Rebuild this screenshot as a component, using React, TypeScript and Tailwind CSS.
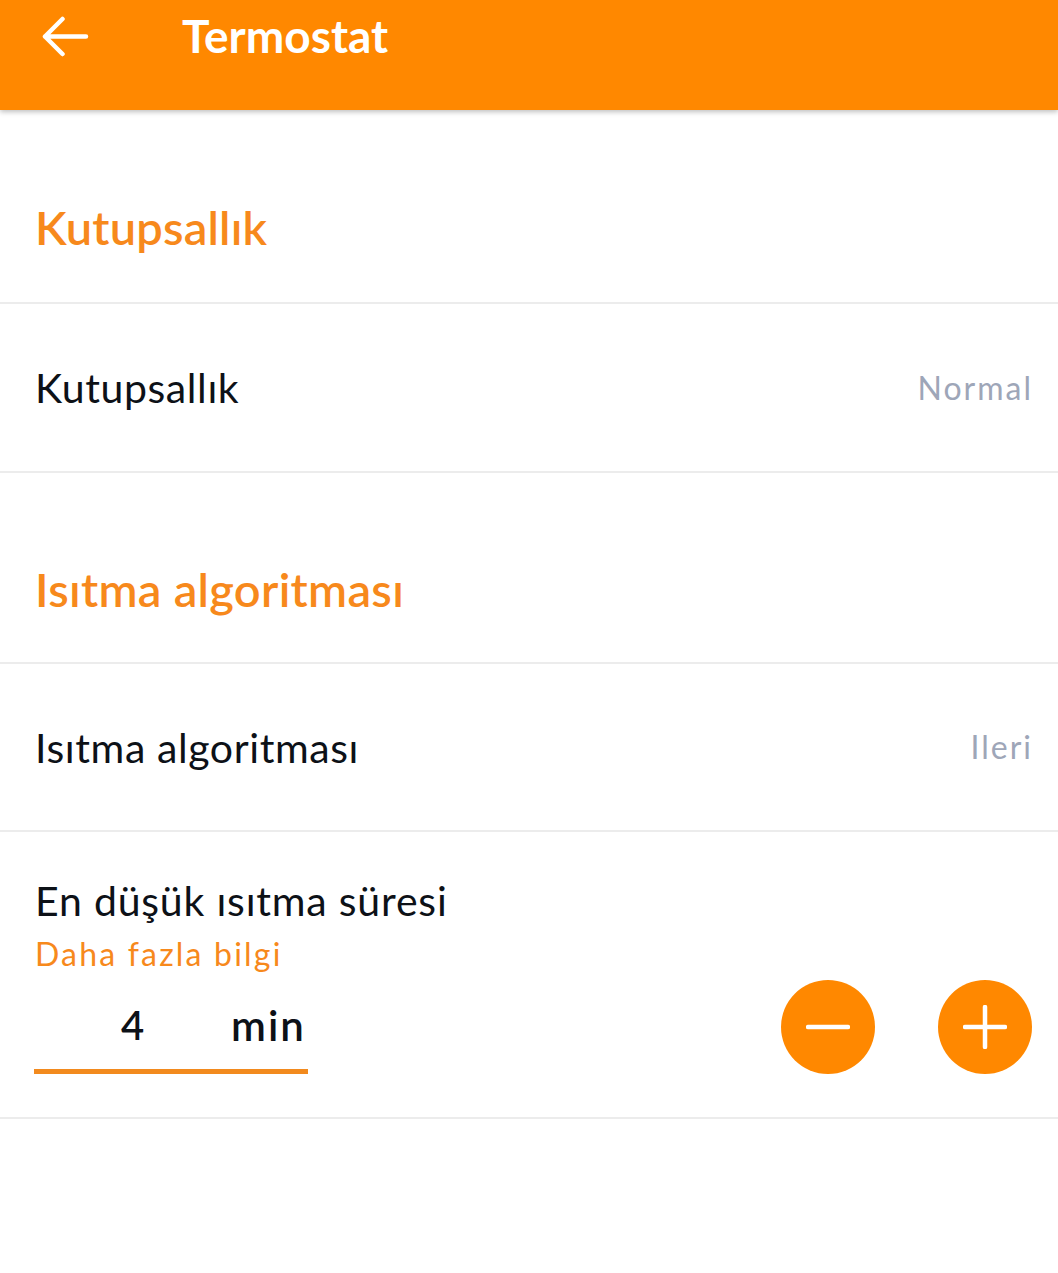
import React from "react";

function BackArrow() {
  return (
    <svg width="48" height="42" viewBox="0 0 48 42" fill="none">
      <path
        d="M45 20.5H4M21.5 3L4 20.5L21.5 38"
        stroke="white"
        strokeWidth="4.5"
        strokeLinecap="round"
        strokeLinejoin="round"
      />
    </svg>
  );
}

function SectionHeader({ title }: { title: string }) {
  return (
    <div className="h-[191px] border-b-2 border-[#ececec] flex items-center pt-[43px] px-[35px]">
      <span className="text-[47px] font-semibold tracking-[0.3px] text-[#f7891c] leading-none">{title}</span>
    </div>
  );
}

function ValueRow({ label, value, h }: { label: string; value: string; h: string }) {
  return (
    <div className={`${h} border-b-2 border-[#ececec] flex items-center justify-between pl-[35px] pr-[25px]`}>
      <span className="text-[41px] tracking-[0.6px] text-[#0d1117] leading-none">{label}</span>
      <span className="text-[32px] tracking-[2px] text-[#9ea6b8] leading-none">{value}</span>
    </div>
  );
}

export default function App() {
  return (
    <div className="w-[1058px] min-h-[1273px] bg-white font-['Lato',sans-serif]">
      <header className="relative z-10 h-[110px] bg-[#ff8800] shadow-[0_2px_5px_rgba(0,0,0,0.25)] flex items-start">
        <div className="h-[74px] flex items-center pl-[41px]">
          <BackArrow />
        </div>
        <h1 className="ml-[93px] text-white font-bold text-[46px] leading-[72px]">Termostat</h1>
      </header>

      <div className="h-[194px] border-b-2 border-[#ececec] flex items-center pt-[43px] px-[35px]">
        <span className="text-[47px] font-semibold tracking-[0.2px] text-[#f7891c] leading-none">Kutupsallık</span>
      </div>
      <ValueRow label="Kutupsallık" value="Normal" h="h-[169px]" />
      <SectionHeader title="Isıtma algoritması" />
      <ValueRow label="Isıtma algoritması" value="Ileri" h="h-[168px]" />

      <div className="h-[287px] border-b-2 border-[#ececec] flex flex-col pt-[45px] pl-[35px] pr-[26px]">
        <div className="text-[41px] tracking-[0.8px] leading-[48px] text-[#0d1117]">En düşük ısıtma süresi</div>
        <div className="mt-[11px] text-[32px] tracking-[2.2px] leading-[36px] text-[#f7891c]">Daha fazla bilgi</div>
        <div className="mt-[8px] flex items-center justify-between">
          <div className="w-[274px] h-[94px] border-b-[5px] border-[#f28a1e] flex items-center -ml-[1px]">
            <span className="w-[197px] text-center text-[40px] font-semibold text-[#0d1117] leading-none">4</span>
            <span className="text-[42px] font-semibold tracking-[2px] text-[#0d1117] leading-none">min</span>
          </div>
          <div className="flex items-center gap-[63px]">
            <button className="w-[94px] h-[94px] rounded-full bg-[#ff8800] flex items-center justify-center">
              <svg width="44" height="44" viewBox="0 0 44 44">
                <path d="M2 22H42" stroke="white" strokeWidth="4.5" strokeLinecap="round" />
              </svg>
            </button>
            <button className="w-[94px] h-[94px] rounded-full bg-[#ff8800] flex items-center justify-center">
              <svg width="44" height="44" viewBox="0 0 44 44">
                <path d="M2 22H42M22 2V42" stroke="white" strokeWidth="4.5" strokeLinecap="round" />
              </svg>
            </button>
          </div>
        </div>
      </div>
    </div>
  );
}
